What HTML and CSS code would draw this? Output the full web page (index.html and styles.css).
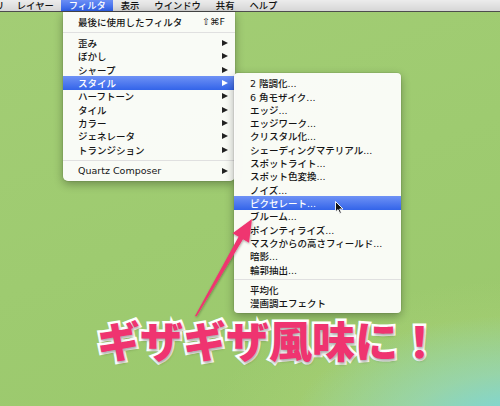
FILE: index.html
```html
<!DOCTYPE html>
<html lang="ja">
<head>
<meta charset="utf-8">
<title>フィルタ メニュー</title>
<link rel="stylesheet" href="styles.css">
</head>
<body>
<div class="desk">
  <div class="menubar">
    <span class="mb-item mb-cut">リ</span>
    <span class="mb-item">レイヤー</span>
    <span class="mb-item active">フィルタ</span>
    <span class="mb-item">表示</span>
    <span class="mb-item">ウインドウ</span>
    <span class="mb-item">共有</span>
    <span class="mb-item">ヘルプ</span>
  </div>

  <div class="menu filter-menu">
    <div class="row"><span>最後に使用したフィルタ</span><span class="key">⇧⌘F</span></div>
    <div class="sep"></div>
    <div class="row"><span>歪み</span><i class="tri"></i></div>
    <div class="row"><span>ぼかし</span><i class="tri"></i></div>
    <div class="row"><span>シャープ</span><i class="tri"></i></div>
    <div class="row hl"><span>スタイル</span><i class="tri"></i></div>
    <div class="row"><span>ハーフトーン</span><i class="tri"></i></div>
    <div class="row"><span>タイル</span><i class="tri"></i></div>
    <div class="row"><span>カラー</span><i class="tri"></i></div>
    <div class="row"><span>ジェネレータ</span><i class="tri"></i></div>
    <div class="row"><span>トランジション</span><i class="tri"></i></div>
    <div class="sep"></div>
    <div class="row"><span>Quartz Composer</span><i class="tri"></i></div>
  </div>

  <div class="menu style-menu">
    <div class="row"><span>2 階調化...</span></div>
    <div class="row"><span>6 角モザイク...</span></div>
    <div class="row"><span>エッジ...</span></div>
    <div class="row"><span>エッジワーク...</span></div>
    <div class="row"><span>クリスタル化...</span></div>
    <div class="row"><span>シェーディングマテリアル...</span></div>
    <div class="row"><span>スポットライト...</span></div>
    <div class="row"><span>スポット色変換...</span></div>
    <div class="row"><span>ノイズ...</span></div>
    <div class="row hl"><span>ピクセレート...</span></div>
    <div class="row"><span>ブルーム...</span></div>
    <div class="row"><span>ポインティライズ...</span></div>
    <div class="row"><span>マスクからの高さフィールド...</span></div>
    <div class="row"><span>暗影...</span></div>
    <div class="row"><span>輪郭抽出...</span></div>
    <div class="sep"></div>
    <div class="row"><span>平均化</span></div>
    <div class="row"><span>漫画調エフェクト</span></div>
  </div>

  <div class="caption">ギザギザ風味に！</div>

  <svg class="overlay" width="500" height="406" viewBox="0 0 500 406">
    <defs>
      <filter id="sh" x="-20%" y="-20%" width="140%" height="140%">
        <feDropShadow dx="0.5" dy="1" stdDeviation="1" flood-color="#000" flood-opacity="0.35"/>
      </filter>
    </defs>
    <polygon filter="url(#sh)" fill="#ef3470" points="195,316 238.6,236.7 232.6,233.2 252,219 249,242.8 243,239.3 196.5,316.5"/>
    <path d="M335.5,201.5 L335.5,212 L338,209.6 L339.8,213.4 L341.4,212.7 L339.7,209 L343,209 Z" fill="#111" stroke="#fff" stroke-width="0.9" stroke-linejoin="round"/>
  </svg>
</div>
</body>
</html>
```

FILE: styles.css
```css
* { box-sizing: border-box; }

html, body {
  margin: 0;
  padding: 0;
}

body {
  width: 500px;
  height: 406px;
  overflow: hidden;
  font-family: "DejaVu Sans", "Noto Sans CJK JP", sans-serif;
}

.desk {
  position: relative;
  width: 500px;
  height: 406px;
  overflow: hidden;
  background:
    radial-gradient(ellipse 230px 115px at 520px 430px, rgba(112, 214, 238, 0.95) 0%, rgba(145, 214, 190, 0.7) 50%, rgba(175, 212, 130, 0) 100%),
    radial-gradient(ellipse 320px 160px at 520px 440px, rgba(188, 222, 132, 0.6) 0%, rgba(175, 212, 125, 0) 100%),
    linear-gradient(160deg, #a3cd75 0%, #9ecb70 50%, #9ac86c 100%);
}

/* ---------- menu bar ---------- */
.menubar {
  display: flex;
  height: 12px;
  background: linear-gradient(#ececec, #d6d6d6);
  border-bottom: 1px solid #4d4d4d;
  font-family: "DejaVu Sans", "Noto Sans CJK JP", sans-serif;
  font-weight: 500;
  font-size: 9.3px;
  line-height: 11px;
  color: #111;
}

.mb-item {
  padding: 0 7.5px;
  white-space: nowrap;
}

.mb-cut {
  margin-left: -5px;
  padding: 0 5px 0 0;
}

.mb-item.active {
  color: #fff;
  background: linear-gradient(#6b8ef4, #2f60e9);
}

/* ---------- menus ---------- */
.menu {
  position: absolute;
  background: rgba(252, 252, 250, 0.97);
  box-shadow: 0 3px 10px rgba(0, 0, 0, 0.32), 0 0 0 0.5px rgba(0, 0, 0, 0.12);
  font-size: 9.5px;
  font-weight: 500;
  color: #151515;
}

.filter-menu {
  left: 63px;
  top: 12px;
  width: 172px;
  padding: 3px 0;
  border-radius: 0 0 5px 5px;
}

.style-menu {
  left: 234px;
  top: 73px;
  width: 167px;
  padding: 3.5px 0 3px;
  border-radius: 4px;
  z-index: 2;
}

.row {
  display: flex;
  align-items: center;
  justify-content: space-between;
  height: 13.33px;
  padding: 0 7px 0 15px;
  white-space: nowrap;
}

.style-menu .row {
  padding-left: 16px;
}

.row.hl {
  color: #fff;
  background: linear-gradient(#6f92f5, #3364e9);
}

.row.hl .tri {
  border-left-color: #fff;
}

.key {
  font-size: 9.5px;
  padding-right: 3px;
}

.tri {
  display: block;
  width: 0;
  height: 0;
  border-top: 3.5px solid transparent;
  border-bottom: 3.5px solid transparent;
  border-left: 6px solid #222;
}

.sep {
  margin: 3.5px 0;
  border-top: 1px solid #e0e0e0;
}

.style-menu .sep {
  margin: 3px 0;
}

/* ---------- caption ---------- */
.caption {
  position: absolute;
  left: 97px;
  top: 318px;
  font-family: "Noto Sans CJK JP", sans-serif;
  font-weight: 900;
  font-size: 43px;
  line-height: 43px;
  color: #ef3470;
  white-space: nowrap;
  -webkit-text-stroke: 5px #fff;
  paint-order: stroke fill;
  text-shadow: 1px 2px 3px rgba(0, 0, 0, 0.35);
  z-index: 3;
}

.overlay {
  position: absolute;
  left: 0;
  top: 0;
  z-index: 4;
  pointer-events: none;
}
```
